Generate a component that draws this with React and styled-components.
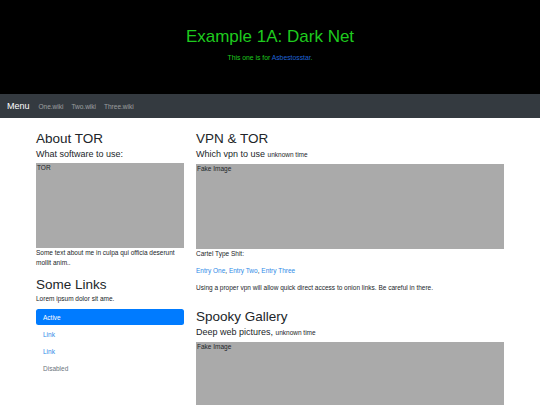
import React from "react";
import styled, { createGlobalStyle } from "styled-components";

const Global = createGlobalStyle`
  html, body { margin: 0; padding: 0; background: #fff; }
  body { font-family: "Liberation Sans", Arial, sans-serif; color: #212529; }
  * { box-sizing: border-box; }
`;

const Hero = styled.header`
  height: 94px;
  background: #000;
  display: flex;
  flex-direction: column;
  align-items: center;
  padding-top: 27px;
`;

const HeroTitle = styled.h1`
  margin: 0;
  font-weight: 400;
  font-size: 17px;
  line-height: 20px;
  color: #1ecb1e;
`;

const HeroSub = styled.p`
  margin: 6px 0 0;
  font-size: 6.8px;
  line-height: 9px;
  color: #1ecb1e;
`;

const HeroLink = styled.a`
  color: #1f63d6;
  text-decoration: none;
`;

const NavBar = styled.nav`
  height: 24px;
  background: #343a40;
  display: flex;
  align-items: center;
  padding: 0 7px;
  gap: 8px;
`;

const Brand = styled.span`
  color: #fff;
  font-size: 9px;
  margin-right: 1px;
`;

const NavLink = styled.a`
  color: rgba(255, 255, 255, 0.5);
  font-size: 6.5px;
  text-decoration: none;
`;

const Grid = styled.main`
  display: grid;
  grid-template-columns: 148px 308px;
  column-gap: 12px;
  padding: 12px 36px 0;
`;

const Column = styled.section`
  display: flex;
  flex-direction: column;
`;

const Heading = styled.h2`
  margin: ${(p) => p.$top || 0}px 0 0;
  font-weight: 400;
  font-size: 13.5px;
  line-height: 17px;
  color: #212529;
`;

const Lead = styled.div`
  margin-top: 1px;
  font-size: 9px;
  line-height: 12px;
  color: #212529;
`;

const Small = styled.small`
  font-size: 6.5px;
`;

const FakeImage = styled.div`
  height: ${(p) => p.$h || 85}px;
  margin-top: 3px;
  background: #aaa;
  color: #212529;
  font-size: 6.5px;
  line-height: 8px;
  padding: 1px 0 0 1px;
`;

const Text = styled.p`
  margin: ${(p) => p.$top || 0}px 0 0;
  font-size: 6.5px;
  line-height: 10px;
  color: #212529;
`;

const Blue = styled.a`
  color: #2e8be8;
  text-decoration: none;
`;

const Pills = styled.ul`
  list-style: none;
  margin: 5px 0 0;
  padding: 0;
  display: flex;
  flex-direction: column;
  gap: 1px;
`;

const Pill = styled.li`
  height: 16px;
  display: flex;
  align-items: center;
  padding-left: 7px;
  font-size: 6.5px;
  border-radius: 2.5px;
  background: ${(p) => (p.$active ? "#007bff" : "transparent")};
  color: ${(p) => (p.$active ? "#fff" : p.$disabled ? "#6c757d" : "#2e8be8")};
`;

export default function App() {
  return (
    <>
      <Global />
      <Hero>
        <HeroTitle>Example 1A: Dark Net</HeroTitle>
        <HeroSub>
          This one is for <HeroLink href="#">Asbestosstar</HeroLink>.
        </HeroSub>
      </Hero>
      <NavBar>
        <Brand>Menu</Brand>
        <NavLink href="#">One.wiki</NavLink>
        <NavLink href="#">Two.wiki</NavLink>
        <NavLink href="#">Three.wiki</NavLink>
      </NavBar>
      <Grid>
        <Column>
          <Heading>About TOR</Heading>
          <Lead>What software to use:</Lead>
          <FakeImage>TOR</FakeImage>
          <Text>Some text about me in culpa qui officia deserunt mollit anim..</Text>
          <Heading $top={8}>Some Links</Heading>
          <Text $top={1}>Lorem ipsum dolor sit ame.</Text>
          <Pills>
            <Pill $active>Active</Pill>
            <Pill>Link</Pill>
            <Pill>Link</Pill>
            <Pill $disabled>Disabled</Pill>
          </Pills>
        </Column>
        <Column>
          <Heading>VPN &amp; TOR</Heading>
          <Lead>
            Which vpn to use <Small>unknown time</Small>
          </Lead>
          <FakeImage>Fake Image</FakeImage>
          <Text>Cartel Type Shit:</Text>
          <Text $top={7}>
            <Blue href="#">Entry One</Blue>, <Blue href="#">Entry Two</Blue>, <Blue href="#">Entry Three</Blue>
          </Text>
          <Text $top={7}>
            Using a proper vpn will allow quick direct access to onion links. Be careful in there.
          </Text>
          <Heading $top={15}>Spooky Gallery</Heading>
          <Lead>
            Deep web pictures, <Small>unknown time</Small>
          </Lead>
          <FakeImage $h={120}>Fake Image</FakeImage>
        </Column>
      </Grid>
    </>
  );
}
